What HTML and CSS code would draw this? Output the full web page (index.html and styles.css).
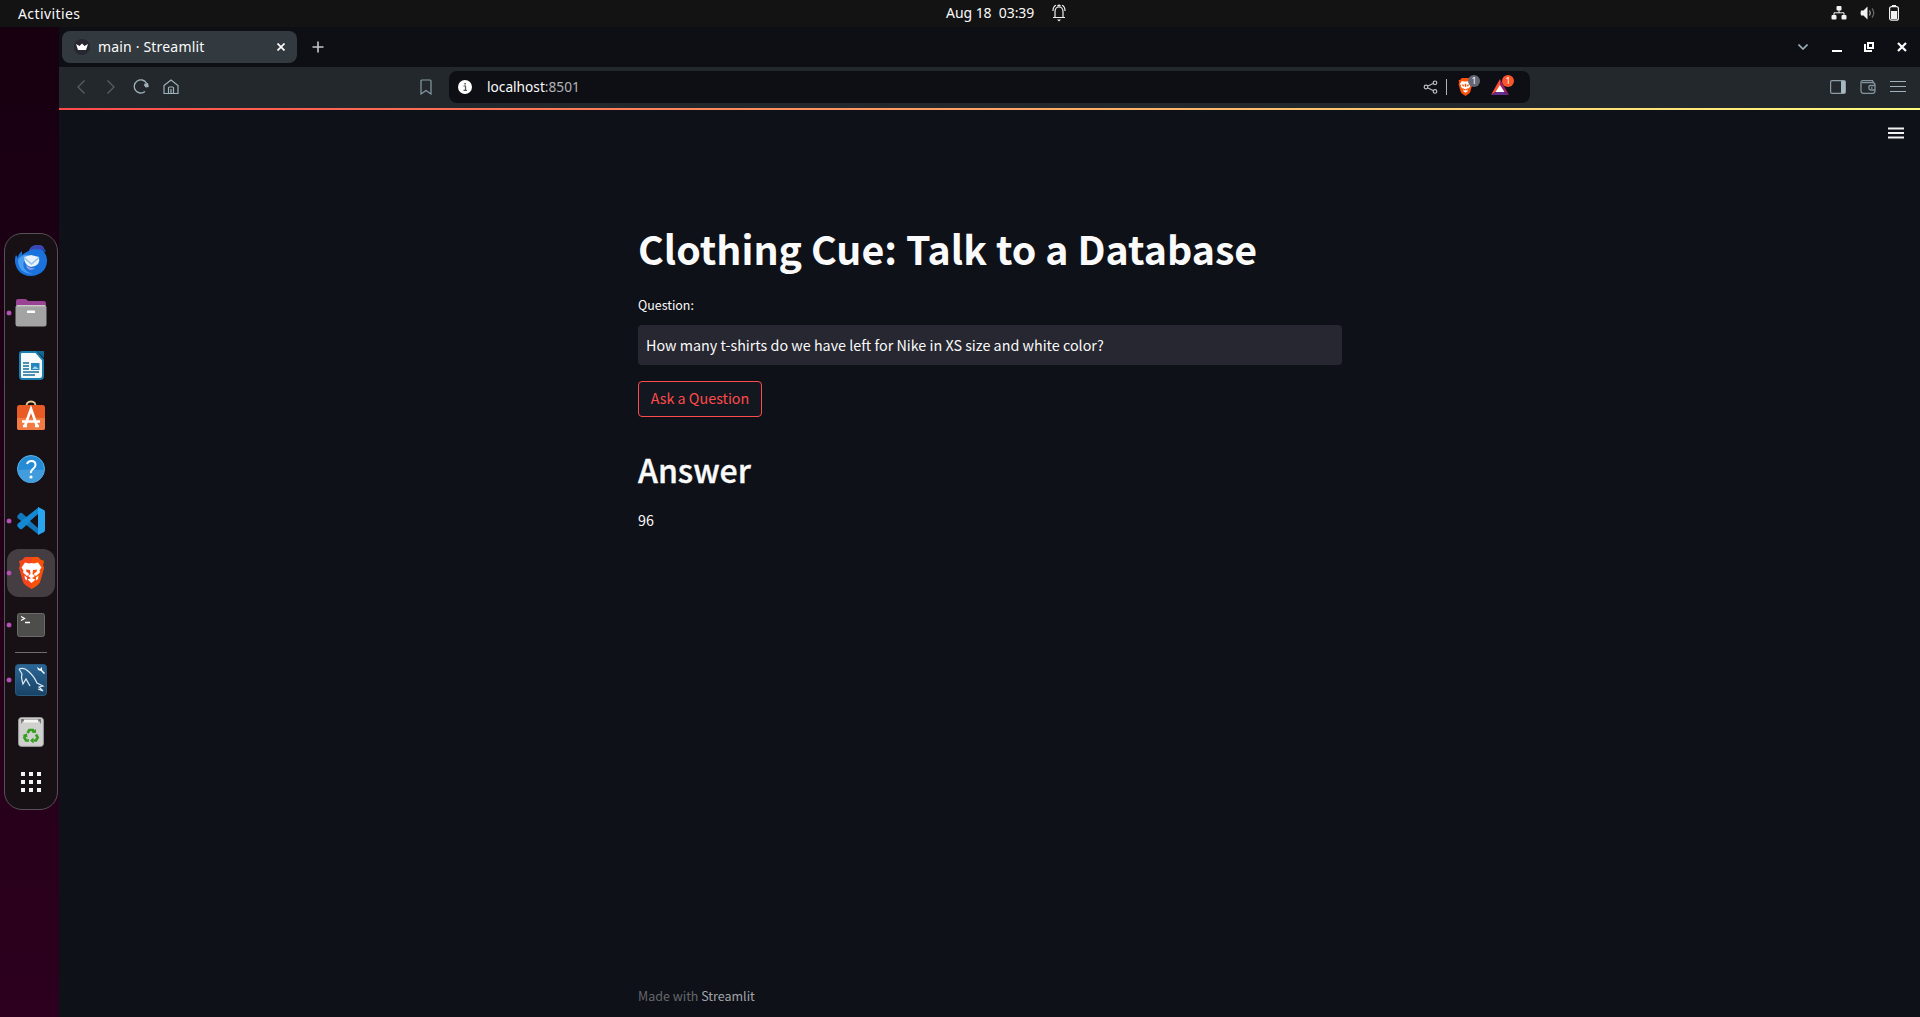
FILE: index.html
```html
<!DOCTYPE html>
<html lang="en">
<head>
<meta charset="utf-8">
<title>main · Streamlit</title>
<link rel="stylesheet" href="styles.css">
</head>
<body>
<header class="topbar">
  <span class="activities">Activities</span>
  <div class="clock"><span class="clock-text">Aug 18&nbsp; 03:39</span>
    <svg width="14" height="18" viewBox="0 0 14 18" fill="none" stroke="#eee" stroke-width="1.2"><path d="M3 13V8C3 4.500 4.500 3 7 3s4 1.500 4 5v5M1 13.500h12M1 7C1 4 2 2 4 1.300M13 7c0-3-1-5-3-5.700M5.500 2Q7 .5 8.500 2"/><path d="M5 15.500h4l-2 2z" fill="#eee" stroke="none"/></svg>
  </div>
  <div class="status">
    <svg width="16" height="14" viewBox="0 0 16 14" fill="#f2f2f2"><rect x="5.500" width="5" height="4.500" rx="1"/><rect x=".5" y="9" width="5" height="4.500" rx="1"/><rect x="10.500" y="9" width="5" height="4.500" rx="1"/><path d="M8 4v3M3 9V6.800h10V9" fill="none" stroke="#f2f2f2"/></svg>
    <svg width="16" height="14" viewBox="0 0 16 14"><path d="M1 4.500h2.500L7.500.5v13L3.500 9.500H1Q0 7 1 4.500" fill="#f2f2f2"/><path d="M9.500 4.500q1.600 2.500 0 5" fill="none" stroke="#aaa" stroke-width="1.300"/><path d="M12 2.500q3.500 4.500 0 9" fill="none" stroke="#666" stroke-width="1.300"/></svg>
    <svg width="10" height="16" viewBox="0 0 10 16"><path d="M3 0h4v2H3z" fill="#f2f2f2"/><rect x=".6" y="1.600" width="8.800" height="13.600" rx="2" fill="none" stroke="#f2f2f2" stroke-width="1.200"/><path d="M2 6h6v8H2z" fill="#f2f2f2"/></svg>
  </div>
</header>
<div class="desktop">
  <aside class="launcher">
    <nav class="dock">
      <div class="app"><svg width="32" height="32" viewBox="0 0 32 32"><path d="M1 10l2 3c0-3 2-5 4-7l0 4c2-2 4-3 7-4 1-4 4-6 9-6 3 0 5 1 6 4l2 2-2 1c4 5 4 12 0 18-7 8-20 8-26 0C0 20-1 15 1 10z" fill="#1a73dc"/><path d="M14 5C16 1 20 0 24 0c3 0 5 2 5.500 4.500C26 6 23 3 14 5z" fill="#3d45b4"/><path d="M3 15c0 9 6 14 15 14-8-2-11-7-9-13 1-3 3-5 6-6-6-1-10 1-12 5z" fill="#4a9cf0"/><path d="M9 12l7-2 8 2q1 4-1 7-3 3-7 3-7-2-7-10z" fill="#e9f2fc"/><path d="m9 12.500 7.500 6.500 7.500-6.500" fill="none" stroke="#93c1f2" stroke-width="1.500"/><path d="M11 19q3 5 9 4-4 4-8 0z" fill="#8f9ce8"/><path d="m27 4 4 2-3 .5z" fill="#1a3c9b"/></svg></div>
      <div class="app running"><svg width="32" height="28" viewBox="0 0 32 28"><path d="M1 8V2Q1 0 3 0h7q2 0 3 2h16q2 0 2 3v3z" fill="#9a4395"/><rect x=".5" y="6" width="31" height="21.500" rx="2.500" fill="#a3a3a3"/><path d="M2 6.800h28" stroke="#dadada"/><rect x="12" y="11.500" width="8" height="2.500" rx=".6" fill="#fff"/></svg></div>
      <div class="app"><svg width="25" height="29" viewBox="0 0 25 29"><path d="M3 1h14l7 8v16q0 3-3 3H3q-2 0-2-3V3q0-2 2-2z" fill="#f7fafb" stroke="#1b7fb0" stroke-width="2"/><path d="M17.500 0H25v7z" fill="#126895"/><path d="M4 12h6M4 15h6M4 18h6M4 21h16M4 24h12" stroke="#186c99" stroke-width="1.400"/><rect x="12" y="12" width="8.500" height="7" fill="#2386bd"/><path d="m13 18 3-3 4 3z" fill="#9dd2eb"/></svg></div>
      <div class="app software"><svg width="28" height="32" viewBox="0 0 28 32"><path d="M9.500 7Q9 1.500 14 1.500T18.500 7" fill="none" stroke="#e8c894" stroke-width="1.800"/><rect y="5" width="28" height="25" rx="2.500" fill="#e95b25"/><path d="M0 18h28v9.500q0 2.500-2.500 2.500h-23Q0 30 0 27.500z" fill="#f17b43"/><path d="M8 26 14 9l6 17M5 21.500h18M6 26h4M18 26h4" fill="none" stroke="#fff" stroke-width="2.700"/></svg></div>
      <div class="app"><svg width="28" height="28" viewBox="0 0 28 28"><circle cx="14" cy="14" r="13.500" fill="#258bd4" stroke="#5bb3ed"/><path d="M1 15q13-1 26 0a13 13 0 0 1-26 0" fill="#439ddd"/><path d="M10 9Q11 6 14.500 6q4 0 4 4 0 2-2.500 4t-2 4" fill="none" stroke="#fff" stroke-width="2"/><circle cx="14" cy="22" r="1.600" fill="#fff"/></svg></div>
      <div class="app running"><svg width="28" height="28" viewBox="0 0 28 28"><path d="m1 8 2-2q1-.6 2 0l17 15v7L1 11.500Q-.5 10 1 8z" fill="#1276b9"/><path d="m1 20 2 2q1 .6 2 0L22 7V0L1 16.500Q-.5 18 1 20z" fill="#1289d2"/><path d="m21 0 6 3q1 .5 1 2v18q0 1.500-1 2l-6 3z" fill="#29a4ee"/><path d="M21 7v14l-8-7z" fill="#171014"/></svg></div>
      <div class="app running active"><svg width="27" height="32" viewBox="0 0 27 32"><path d="M7 0h13l3 3 3 1-1 4 1 3-4 14q-1 3-8.500 7Q6 28 5 25L1 11l1-3-1-4 3-1z" fill="#f4451d"/><path d="M14 0h6l3 3 3 1-1 4 1 3-4 14q-1 3-8.500 7z" fill="#fb5900" opacity=".7"/><path d="m7 5.500 4 1 2.500-.5 2.500.5 4-1 3.500 5-2 3 .5 2-4 3.500-2-1.500.5-1.500 2-1 .5-2.500-4 .5-.5 4 2.500 2-3.500 2.500-3.500-2.500 2.500-2-.5-4-4-.5.500 2.500 2 1 .5 1.500-2 1.500L5 15.500l.5-2-2-3z" fill="#fff"/><path d="m9.500 22.500 4-1.500 4 1.500-4 3.500zM6.500 18.500l2.500 2v3l-2-1.500zM20.500 18.500l-2.500 2v3l2-1.500z" fill="#fff"/></svg></div>
      <div class="app running"><svg width="28" height="24" viewBox="0 0 28 24"><rect x=".5" y=".5" width="27" height="23" rx="2" fill="#4d4d4c" stroke="#6a6a68"/><path d="m4 3.500 3.500 2L4 7.500M8 9.500h5" fill="none" stroke="#fff" stroke-width="1.300"/></svg></div>
      <div class="rule"></div>
      <div class="app running"><svg width="32" height="32" viewBox="0 0 32 32"><defs><linearGradient id="sea" x2="0" y2="1"><stop stop-color="#2b6798"/><stop offset="1" stop-color="#194264"/></linearGradient></defs><rect x=".5" y=".5" width="31" height="31" rx="3" fill="url(#sea)" stroke="#295b80"/><path d="M4 5q5-2 9 2 6 5 9 12l6 3-4 1 4 4-5-2M4 5l3 5q-1 3 0 6l1 4 3-5 4 7" fill="none" stroke="#e1edf5" stroke-width="1.200"/><path d="m22 3 1 3 3 1 3 3 1-1-3-3V3l-2 2z" fill="#fff"/></svg></div>
      <div class="app"><svg width="26" height="30" viewBox="0 0 26 30"><rect x=".7" y=".7" width="24.600" height="28.600" rx="2.500" fill="#d0d0ce" stroke="#aaa"/><path d="M3 2h20v5l-2-3H5L3 7z" fill="#777"/><path d="M6 2.500h14v3H6z" fill="#f5f5f4"/><g fill="none" stroke="#35a020" stroke-width="2.600"><path d="m9.500 16 1.800-3h3.500l1.200 2M18 17.500l1.700 3-1.700 3h-2.500M11 23.500H8l-1.700-3L7.500 18"/></g><path d="m13.500 15.500 4.500.5v-4zM15.500 20.500 12 23.500l3.500 3zM4.500 18 9 16.500l.5 4z" fill="#35a020"/></svg></div>
      <div class="app grid"><svg width="20" height="20" viewBox="0 0 20 20" fill="#f3f3f3"><path d="M0 0h4v4H0zM8 0h4v4H8zM16 0h4v4h-4zM0 8h4v4H0zM8 8h4v4H8zM16 8h4v4h-4zM0 16h4v4H0zM8 16h4v4H8zM16 16h4v4h-4z"/></svg></div>
    </nav>
  </aside>
  <section class="browser">
    <div class="tabstrip">
      <div class="tab">
        <svg width="16" height="16" viewBox="0 0 16 16"><circle cx="8" cy="8" r="8" fill="#262730"/><path d="m2 5 3.500 2L8 4.500 10.500 7 14 5l-2 6H4z" fill="#fff"/></svg>
        <span class="tab-title">main · Streamlit</span>
        <svg width="8" height="8" viewBox="0 0 8 8" stroke="#fff" stroke-width="1.700"><path d="m.5.5 7 7m0-7-7 7"/></svg>
      </div>
      <svg class="newtab" width="12" height="12" viewBox="0 0 12 12" stroke="#c5c8ca" stroke-width="1.600"><path d="M6 .5v11M.5 6h11"/></svg>
      <div class="window-controls">
        <svg width="10" height="6" viewBox="0 0 10 6" fill="none" stroke="#9cb0ba" stroke-width="1.600"><path d="m.5.500 4.500 4.500L9.500.5"/></svg>
        <svg class="minimize" width="10" height="10" viewBox="0 0 10 10"><path d="M0 8h10v2H0z" fill="#fff"/></svg>
        <svg width="10" height="10" viewBox="0 0 10 10" fill="none" stroke="#fff" stroke-width="2"><path d="M4 1h5v5H4zM1 2v7h7"/></svg>
        <svg width="10" height="10" viewBox="0 0 10 10" stroke="#fff" stroke-width="2.200"><path d="m1 1 8 8m0-8L1 9"/></svg>
      </div>
    </div>
    <div class="toolbar">
      <div class="tools">
        <span><svg width="8" height="14" viewBox="0 0 8 14" fill="none" stroke="#596167" stroke-width="1.200"><path d="M7.500.5 1 7l6.500 6.500"/></svg></span>
        <span><svg width="8" height="14" viewBox="0 0 8 14" fill="none" stroke="#596167" stroke-width="1.200"><path d="M.5.500 7 7 .5 13.500"/></svg></span>
        <span><svg width="16" height="16" viewBox="0 0 16 16"><path d="M13.500 4A6.600 6.600 0 1 0 12 12.600" fill="none" stroke="#9fb1bb" stroke-width="1.300"/><path d="M11.500 4.500 15 4l.8 4-3 .5-1.800-2z" fill="#9fb1bb"/></svg></span>
        <span><svg width="16" height="16" viewBox="0 0 16 16" fill="none" stroke="#9fb1bb" stroke-width="1.200"><path d="M1 6.500 8 1l7 5.500v8H1zM5.500 14.500V9q0-1 1-1h3q1 0 1 1v5.500M8 10v4.500"/></svg></span>
      </div>
      <span class="bookmark"><svg width="12" height="16" viewBox="0 0 12 16" fill="none" stroke="#869aa4" stroke-width="1.200"><path d="M1 15V2Q1 1 2 1h8q1 0 1 1v13l-5-3.500z"/></svg></span>
      <div class="omnibox">
        <svg width="14" height="14" viewBox="0 0 14 14"><circle cx="7" cy="7" r="7" fill="#fff"/><path d="M5.500 6h2v4M5.500 10.400h3.500" fill="none" stroke="#555" stroke-width="1.200"/><path d="M6.300 3h1.500v1.500H6.300z" fill="#555"/></svg>
        <span class="url">localhost<span class="port">:8501</span></span>
        <svg width="15" height="14" viewBox="0 0 15 14" fill="none" stroke="#b9bcc0" stroke-width="1.200"><circle cx="3" cy="7" r="1.800"/><circle cx="12" cy="2.800" r="1.800"/><circle cx="12" cy="11.400" r="1.800"/><path d="m5 6 5-2.500M5 8l5 2.500"/></svg>
        <i class="divider"></i>
        <span class="extension"><svg width="15" height="18" viewBox="0 0 27 32"><path d="M7 0h13l3 3 3 1-1 4 1 3-4 14q-1 3-8.500 7Q6 28 5 25L1 11l1-3-1-4 3-1z" fill="#f9520b"/><path d="m7 5 4 1h5l4-1 3.500 5.500-2 3 .5 2-4 3.500-1 5-3.500 2.500L10 24l-1-5-4-3.500.5-2-2-3z" fill="#fff"/><path d="m6 11 5.500 1.500-2 3zM21 11l-5.500 1.500 2 3zM12 10h3l-.5 6h-2zM9 18l4.500 2.500L18 18l-1 4h-7z" fill="#f9520b"/></svg><b class="badge">1</b></span>
        <span class="extension bat"><svg width="18" height="16" viewBox="0 0 18 16"><path d="M9 0 0 16l9-6z" fill="#ff5030"/><path d="m9 0 9 16-9-6z" fill="#9e1f63"/><path d="m0 16 5-3h8l5 3z" fill="#662d91"/><path d="m9 6 4.500 7h-9z" fill="#fff"/></svg><b class="badge hot">1</b></span>
      </div>
      <div class="tools end">
        <span><svg width="16" height="14" viewBox="0 0 16 14"><rect x=".6" y=".6" width="14.800" height="12.800" rx="1.500" fill="none" stroke="#8c9ca4" stroke-width="1.200"/><path d="M11 1h4v12h-4z" fill="#a6b8c0"/></svg></span>
        <span><svg width="16" height="14" viewBox="0 0 16 14" fill="none" stroke="#82949d" stroke-width="1.300"><path d="M1 2.500Q1 .6 3 .6h9.500l1 2H2M1 2v9q0 2.400 2.400 2.400h9.200q2.400 0 2.400-2.400V5q0-2.400-2.400-2.400M15 5.500h-4.500q-1.700 0-1.700 2t1.700 2.500H15M11 8h1.500"/></svg></span>
        <span><svg width="16" height="12" viewBox="0 0 16 12" stroke="#9fb1bb"><path d="M0 .5h16M0 5.500h16M0 10.500h16"/></svg></span>
      </div>
    </div>
    <div class="decoration"></div>
    <main class="page">
      <svg class="menu" width="16" height="12" viewBox="0 0 16 12" stroke="#f1f1f3" stroke-width="2"><path d="M0 1.500h16M0 6h16M0 10.500h16"/></svg>
      <div class="content">
        <h1>Clothing Cue: Talk to a Database</h1>
        <label class="label" for="question">Question:</label>
        <div class="field" id="question">How many t-shirts do we have left for Nike in XS size and white color?</div>
        <button class="ask">Ask a Question</button>
        <h2>Answer</h2>
        <p class="result">96</p>
        <footer>Made with <span class="brand">Streamlit</span></footer>
      </div>
    </main>
  </section>
</div>
</body>
</html>
```
FILE: styles.css
```css
* { box-sizing: border-box; }
body { margin: 0; width: 1920px; height: 1017px; overflow: hidden; background: #0e1117; color: #fafafa; font: 14px/20px "Noto Sans", sans-serif; display: flex; flex-direction: column; }
svg { display: block; flex: none; }
.topbar { height: 27px; flex: none; background: #131313; display: grid; grid-template-columns: 946px 1fr auto; align-items: center; }
.activities { padding-left: 18px; font-size: 14px; letter-spacing: .4px; }
.clock { display: flex; align-items: center; gap: 18px; margin-top: -1px; }
.clock-text { width: 88px; white-space: nowrap; font-size: 14px; letter-spacing: -.05px; }
.status { display: flex; align-items: center; gap: 13px; padding-right: 21px; margin-top: -1px; }
.desktop { flex: 1; display: flex; min-height: 0; }
.launcher { width: 59px; flex: none; background: linear-gradient(#170010, #2c001e); padding: 206px 1px 0 4px; }
.dock { width: 54px; height: 577px; background: #171014; border: 1px solid #57515a; border-radius: 18px; padding: 3px 2px 2px; display: flex; flex-direction: column; align-items: center; }
.app { width: 48px; height: 48px; margin-bottom: 4px; display: flex; align-items: center; justify-content: center; position: relative; border-radius: 12px; flex: none; }
.software { padding-bottom: 2px; }
.active { background: #443e42; }
.running::before { content: ""; position: absolute; left: 0; top: 22px; width: 4px; height: 4px; border-radius: 50%; background: #b853b8; box-shadow: 0 0 0 .5px #9a449a; }
.rule { width: 32px; height: 1px; background: #716b70; margin: -1px 0 3px; flex: none; }
.grid { margin-top: -2px; }
.browser { flex: 1; display: flex; flex-direction: column; }
.tabstrip { height: 40px; background: #0e0f14; display: flex; align-items: center; padding-left: 3px; }
.tab { width: 235px; height: 32px; border-radius: 8px; background: #323a3f; display: flex; align-items: center; padding: 0 12px; }
.tab-title { flex: 1; padding-left: 8px; font-size: 14px; letter-spacing: .18px; }
.newtab { margin-left: 15px; }
.window-controls { margin-left: auto; display: flex; align-items: center; gap: 23px; padding-right: 13px; }
.minimize { margin: 0 -1px 0 1px; }
.toolbar { height: 41px; background: #23282c; display: flex; align-items: center; padding: 0 7px 1px; }
.tools { display: flex; }
.tools > span, .bookmark { width: 30px; height: 30px; display: flex; align-items: center; justify-content: center; }
.bookmark { margin-left: 225px; }
.omnibox { width: 1081px; height: 32px; margin: 0 0 0 8px; border-radius: 8px; background: #0e0f14; display: flex; align-items: center; padding: 0 21px 0 9px; }
.url { flex: 1; padding-left: 15px; font-size: 13.700px; }
.port { color: #b3b4b7; }
.divider { width: 1px; height: 16px; background: #b4b4b8; margin: 0 11px 0 8px; }
.extension { position: relative; }
.bat { margin-left: 18px; }
.badge { position: absolute; left: 10px; top: -3px; width: 12px; height: 12px; border-radius: 50%; background: #646876; color: #fff; font: 9px/12px "Noto Sans", sans-serif; text-align: center; }
.hot { background: #fb542b; left: 11px; top: -4px; }
.end { margin-left: auto; }
.decoration { height: 2px; background: linear-gradient(90deg, #ff4b4b, #fffd80); }
.page { flex: 1; min-height: 0; background: #0e1117; display: flex; flex-direction: column; font-family: "Noto Sans CJK SC", "Noto Sans", sans-serif; }
.menu { align-self: flex-end; margin: 17px 16px 0 0; }
.content { flex: 1; width: 704px; margin-left: 579px; padding-top: 82px; display: flex; flex-direction: column; align-items: flex-start; font-size: 14.340px; }
h1 { margin: 0; font-size: 39.350px; line-height: 53px; font-weight: 700; white-space: nowrap; }
.label { margin-top: 21px; font-size: 12.450px; line-height: 20px; }
.field { margin-top: 10px; width: 704px; height: 40px; border-radius: 4px; background: #262730; padding: 8px; line-height: 24px; }
.ask { margin-top: 16px; width: 124px; height: 36px; border: 1px solid #ff4b4b; border-radius: 4px; background: #131720; color: #ff4b4b; font: inherit; padding: 0 0 2px; white-space: nowrap; }
h2 { margin: 32px 0 0; font-size: 32px; line-height: 40px; font-weight: 500; -webkit-text-stroke: .4px #fafafa; }
.result { margin: 19px 0 0; line-height: 24px; }
footer { margin-top: auto; margin-bottom: 11px; font-size: 12.500px; line-height: 20px; color: #66686d; }
.brand { color: #a3a5a9; }
```
